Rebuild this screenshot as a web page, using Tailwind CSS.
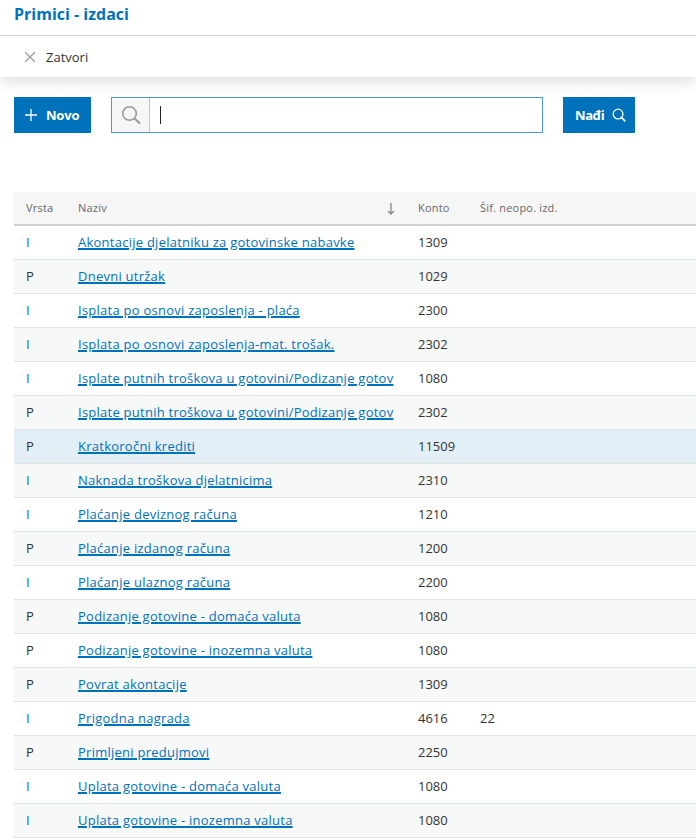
<!DOCTYPE html>
<html lang="hr">
<head>
    <meta charset="UTF-8" />
    <title>Primici - izdaci</title>
    <script src="https://cdn.jsdelivr.net/npm/@tailwindcss/browser@4"></script>
</head>
<body class="bg-white h-[838px] overflow-hidden font-['Open_Sans',sans-serif] text-[13px] text-[#333]">

<!-- Naslov i alatna traka -->
<div class="shadow-[0_4px_14px_rgba(0,0,0,0.14)]">
    <div class="h-[36px] border-b border-[#d0d0d0] pl-[14px] pt-[2px]">
        <h1 class="text-[16px] leading-[24px] font-bold text-[#0072bc]">Primici - izdaci</h1>
    </div>
    <div class="h-[41px] flex items-center pl-[24px]">
        <svg class="w-[12px] h-[12px] mr-[10px]" viewBox="0 0 12 12" fill="none" stroke="#9a9a9a" stroke-width="1.2"><path d="M1 1l10 10M11 1L1 11"/></svg>
        <span class="leading-[18px] text-[13px] mt-[1px]">Zatvori</span>
    </div>
</div>

<!-- Pretraga -->
<div class="flex pl-[14px] mt-[20px] h-[36px]">
    <button class="w-[77px] h-[36px] bg-[#0072bc] text-white font-bold text-[13px] flex items-center pl-[11px]">
        <svg class="w-[12px] h-[12px] mr-[9px]" viewBox="0 0 12 12" fill="none" stroke="#fff" stroke-width="1.3"><path d="M6 0v12M0 6h12"/></svg>
        <span class="mt-[1px] tracking-[-0.2px]">Novo</span>
    </button>
    <div class="ml-[20px] w-[432px] h-[36px] border border-[#4a9bd4] flex">
        <div class="w-[38px] bg-[#f6f6f6] border-r border-[#c4c4c4] flex items-center justify-center">
            <svg class="w-[20px] h-[20px]" viewBox="0 0 20 20" fill="none" stroke="#9a9a9a" stroke-width="1.6"><circle cx="8.5" cy="8.5" r="6.8"/><path d="M13.5 13.5l5.5 5" stroke-width="2"/></svg>
        </div>
        <div class="flex items-center pl-[10px]"><div class="w-[1px] h-[18px] bg-[#222]"></div></div>
    </div>
    <button class="ml-[20px] w-[72px] h-[36px] bg-[#0072bc] text-white font-bold text-[13px] flex items-center pl-[12px]">
        <span class="mt-[1px] tracking-[-0.4px]">Nađi</span>
        <svg class="w-[14px] h-[14px] ml-[8px]" viewBox="0 0 15 15" fill="none" stroke="#fff" stroke-width="1.4"><circle cx="6.5" cy="6.5" r="5.2"/><path d="M10.3 10.3l4 4" stroke-width="1.7"/></svg>
    </button>
</div>

<!-- Tablica -->
<div class="ml-[14px] mt-[59px]">
    <div class="h-[34px] bg-[#f6f6f6] border-b-[2px] border-[#d0d0d0] flex items-center text-[11px] font-medium text-[#666] tracking-[0.2px]">
        <div class="w-[64px] pl-[12px]">Vrsta</div>
        <div class="w-[340px] flex justify-between items-center pr-[23px]">
            <span>Naziv</span>
            <svg class="w-[8px] h-[12px] mt-[2px]" viewBox="0 0 8 12" fill="none" stroke="#888" stroke-width="1.3"><path d="M4 0v11M1 8l3 3 3-3"/></svg>
        </div>
        <div class="w-[62px]">Konto</div>
        <div>Šif. neopo. izd.</div>
    </div>
    <div id="redovi">
        <div class="h-[34px] bg-white border-b border-[#e2e2e2] flex items-center"><div class="w-[64px] pl-[12px] text-[#0072bc]">I</div><div class="w-[340px]"><a href="#" class="font-medium tracking-[0.25px] text-[#0072bc] underline decoration-[1.5px]">Akontacije djelatniku za gotovinske nabavke</a></div><div class="w-[62px]">1309</div><div></div></div>
        <div class="h-[34px] bg-[#f7f8f8] border-b border-[#e2e2e2] flex items-center"><div class="w-[64px] pl-[12px]">P</div><div class="w-[340px]"><a href="#" class="font-medium tracking-[0.25px] text-[#0072bc] underline decoration-[1.5px]">Dnevni utržak</a></div><div class="w-[62px]">1029</div><div></div></div>
        <div class="h-[34px] bg-white border-b border-[#e2e2e2] flex items-center"><div class="w-[64px] pl-[12px] text-[#0072bc]">I</div><div class="w-[340px]"><a href="#" class="font-medium tracking-[0.25px] text-[#0072bc] underline decoration-[1.5px]">Isplata po osnovi zaposlenja - plaća</a></div><div class="w-[62px]">2300</div><div></div></div>
        <div class="h-[34px] bg-[#f7f8f8] border-b border-[#e2e2e2] flex items-center"><div class="w-[64px] pl-[12px] text-[#0072bc]">I</div><div class="w-[340px]"><a href="#" class="font-medium tracking-[0.25px] text-[#0072bc] underline decoration-[1.5px]">Isplata po osnovi zaposlenja-mat. trošak.</a></div><div class="w-[62px]">2302</div><div></div></div>
        <div class="h-[34px] bg-white border-b border-[#e2e2e2] flex items-center"><div class="w-[64px] pl-[12px] text-[#0072bc]">I</div><div class="w-[340px]"><a href="#" class="font-medium tracking-[0.25px] text-[#0072bc] underline decoration-[1.5px]">Isplate putnih troškova u gotovini/Podizanje gotov</a></div><div class="w-[62px]">1080</div><div></div></div>
        <div class="h-[34px] bg-[#f7f8f8] border-b border-[#e2e2e2] flex items-center"><div class="w-[64px] pl-[12px]">P</div><div class="w-[340px]"><a href="#" class="font-medium tracking-[0.25px] text-[#0072bc] underline decoration-[1.5px]">Isplate putnih troškova u gotovini/Podizanje gotov</a></div><div class="w-[62px]">2302</div><div></div></div>
        <div class="h-[34px] bg-[#e3eff7] border-b border-[#e2e2e2] flex items-center"><div class="w-[64px] pl-[12px]">P</div><div class="w-[340px]"><a href="#" class="font-medium tracking-[0.25px] text-[#0072bc] underline decoration-[1.5px]">Kratkoročni krediti</a></div><div class="w-[62px]">11509</div><div></div></div>
        <div class="h-[34px] bg-[#f7f8f8] border-b border-[#e2e2e2] flex items-center"><div class="w-[64px] pl-[12px] text-[#0072bc]">I</div><div class="w-[340px]"><a href="#" class="font-medium tracking-[0.25px] text-[#0072bc] underline decoration-[1.5px]">Naknada troškova djelatnicima</a></div><div class="w-[62px]">2310</div><div></div></div>
        <div class="h-[34px] bg-white border-b border-[#e2e2e2] flex items-center"><div class="w-[64px] pl-[12px] text-[#0072bc]">I</div><div class="w-[340px]"><a href="#" class="font-medium tracking-[0.25px] text-[#0072bc] underline decoration-[1.5px]">Plaćanje deviznog računa</a></div><div class="w-[62px]">1210</div><div></div></div>
        <div class="h-[34px] bg-[#f7f8f8] border-b border-[#e2e2e2] flex items-center"><div class="w-[64px] pl-[12px]">P</div><div class="w-[340px]"><a href="#" class="font-medium tracking-[0.25px] text-[#0072bc] underline decoration-[1.5px]">Plaćanje izdanog računa</a></div><div class="w-[62px]">1200</div><div></div></div>
        <div class="h-[34px] bg-white border-b border-[#e2e2e2] flex items-center"><div class="w-[64px] pl-[12px] text-[#0072bc]">I</div><div class="w-[340px]"><a href="#" class="font-medium tracking-[0.25px] text-[#0072bc] underline decoration-[1.5px]">Plaćanje ulaznog računa</a></div><div class="w-[62px]">2200</div><div></div></div>
        <div class="h-[34px] bg-[#f7f8f8] border-b border-[#e2e2e2] flex items-center"><div class="w-[64px] pl-[12px]">P</div><div class="w-[340px]"><a href="#" class="font-medium tracking-[0.25px] text-[#0072bc] underline decoration-[1.5px]">Podizanje gotovine - domaća valuta</a></div><div class="w-[62px]">1080</div><div></div></div>
        <div class="h-[34px] bg-white border-b border-[#e2e2e2] flex items-center"><div class="w-[64px] pl-[12px]">P</div><div class="w-[340px]"><a href="#" class="font-medium tracking-[0.25px] text-[#0072bc] underline decoration-[1.5px]">Podizanje gotovine - inozemna valuta</a></div><div class="w-[62px]">1080</div><div></div></div>
        <div class="h-[34px] bg-[#f7f8f8] border-b border-[#e2e2e2] flex items-center"><div class="w-[64px] pl-[12px]">P</div><div class="w-[340px]"><a href="#" class="font-medium tracking-[0.25px] text-[#0072bc] underline decoration-[1.5px]">Povrat akontacije</a></div><div class="w-[62px]">1309</div><div></div></div>
        <div class="h-[34px] bg-white border-b border-[#e2e2e2] flex items-center"><div class="w-[64px] pl-[12px] text-[#0072bc]">I</div><div class="w-[340px]"><a href="#" class="font-medium tracking-[0.25px] text-[#0072bc] underline decoration-[1.5px]">Prigodna nagrada</a></div><div class="w-[62px]">4616</div><div>22</div></div>
        <div class="h-[34px] bg-[#f7f8f8] border-b border-[#e2e2e2] flex items-center"><div class="w-[64px] pl-[12px]">P</div><div class="w-[340px]"><a href="#" class="font-medium tracking-[0.25px] text-[#0072bc] underline decoration-[1.5px]">Primljeni predujmovi</a></div><div class="w-[62px]">2250</div><div></div></div>
        <div class="h-[34px] bg-white border-b border-[#e2e2e2] flex items-center"><div class="w-[64px] pl-[12px] text-[#0072bc]">I</div><div class="w-[340px]"><a href="#" class="font-medium tracking-[0.25px] text-[#0072bc] underline decoration-[1.5px]">Uplata gotovine - domaća valuta</a></div><div class="w-[62px]">1080</div><div></div></div>
        <div class="h-[34px] bg-[#f7f8f8] border-b border-[#e2e2e2] flex items-center"><div class="w-[64px] pl-[12px] text-[#0072bc]">I</div><div class="w-[340px]"><a href="#" class="font-medium tracking-[0.25px] text-[#0072bc] underline decoration-[1.5px]">Uplata gotovine - inozemna valuta</a></div><div class="w-[62px]">1080</div><div></div></div>
    </div>
</div>

</body>
</html>
